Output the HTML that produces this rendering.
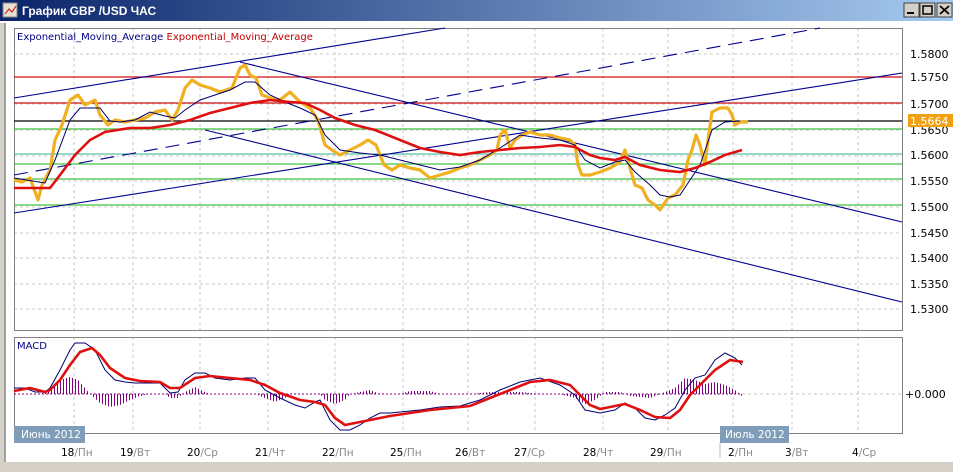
<!DOCTYPE html>
<html><head><meta charset="utf-8"><style>
body{margin:0;width:953px;height:467px;overflow:hidden;background:#d4d0c8;font-family:"Liberation Sans","DejaVu Sans",sans-serif}
</style></head><body>
<svg width="953" height="467" xmlns="http://www.w3.org/2000/svg" font-family="'DejaVu Sans','Liberation Sans',sans-serif">
<defs>
<linearGradient id="tb" x1="0" x2="1"><stop offset="0" stop-color="#0a246a"/><stop offset="1" stop-color="#a6caf0"/></linearGradient>
<pattern id="hp" width="3" height="10" patternUnits="userSpaceOnUse"><rect x="0" y="0" width="1" height="10" fill="#800080"/></pattern>
</defs>
<rect x="0" y="0" width="953" height="21" fill="url(#tb)"/>
<rect x="3" y="3" width="14" height="14" fill="#e8e0d0" stroke="#888"/>
<path d="M5 14 L9 9 L12 12 L16 6" stroke="#c00" fill="none"/>
<text x="22" y="15" fill="#fff" font-weight="bold" font-size="12" font-family="'Liberation Sans',sans-serif">График GBP /USD  ЧАС</text>
<g fill="#d4d0c8" stroke="#404040"><rect x="904" y="3" width="15" height="14"/><rect x="920" y="3" width="15" height="14"/><rect x="937" y="3" width="15" height="14"/></g>
<rect x="907" y="12" width="7" height="2" fill="#000"/><rect x="923" y="6" width="9" height="8" fill="none" stroke="#000" stroke-width="1.5"/>
<path d="M940 6 L949 14 M949 6 L940 14" stroke="#000" stroke-width="1.8"/>
<rect x="0" y="21" width="953" height="2" fill="#fff"/>
<rect x="4" y="23" width="949" height="440" fill="#fff"/>
<rect x="4" y="23" width="2" height="440" fill="#a0a0a0"/>
<rect x="0" y="462" width="953" height="5" fill="#d4d0c8"/>
<g stroke="#c8c8c8" stroke-dasharray="3,3" stroke-width="1">
<path d="M74 28V330M133 28V330M200 28V330M268 28V330M335 28V330M403 28V330M468 28V330M535 28V330M603 28V330M668 28V330M733 28V330M792 28V330M858 28V330"/>
<path d="M14 54H902M14 77H902M14 104H902M14 130H902M14 156H902M14 181H902M14 207H902M14 233H902M14 258H902M14 284H902M14 309H902"/>
<path d="M74 337V433M133 337V433M200 337V433M268 337V433M335 337V433M403 337V433M468 337V433M535 337V433M603 337V433M668 337V433M733 337V433M792 337V433M858 337V433"/>
<path d="M742 394H902"/>
</g>
<rect x="14.5" y="28.5" width="888" height="302" fill="none" stroke="#808080"/>
<rect x="14.5" y="337.5" width="888" height="96" fill="none" stroke="#808080"/>
<text x="17" y="40" font-size="10" fill="#000080">Exponential_Moving_Average <tspan fill="#c00000">Exponential_Moving_Average</tspan></text>
<path d="M14 77H902M14 103H902" stroke="#d01010" stroke-width="1.2"/>
<path d="M14 121H902" stroke="#000" stroke-width="1.2"/>
<path d="M14 129H902M14 164H902M14 179H902M14 205H902" stroke="#40c040" stroke-width="1.2"/>
<path d="M14 154H902" stroke="#30b090" stroke-width="1"/>
<g stroke="#000090" stroke-width="1.1" fill="none">
<path d="M14 98L445 28"/>
<path d="M14 175L820 28" stroke-dasharray="14,8"/>
<path d="M14 213L902 73"/>
<path d="M240 62L902 222"/>
<path d="M205 130L902 302"/>
</g>
<polyline fill="none" stroke="#f0b020" stroke-width="3.2" stroke-linejoin="round" points="14,180 22,182 30,178 38,200 42,185 50,170 55,140 62,125 70,100 78,95 85,105 95,100 100,115 108,125 115,120 125,122 135,120 145,118 155,112 165,110 172,120 178,110 185,88 192,80 200,85 210,88 220,92 232,88 240,68 245,65 250,75 256,78 262,95 270,98 280,100 290,92 300,102 310,108 318,120 325,145 332,150 340,155 350,150 360,145 368,140 376,145 384,165 392,170 400,165 410,168 420,170 430,178 440,175 450,172 460,168 470,165 480,160 490,155 497,150 500,135 505,130 510,148 515,140 522,135 530,132 540,135 550,135 560,138 570,140 575,145 578,165 582,175 590,175 600,172 610,168 620,162 625,150 630,168 635,185 642,188 648,200 655,205 660,210 668,198 675,195 683,185 688,160 692,150 696,135 700,145 705,165 708,140 712,112 720,108 728,108 732,115 735,125 740,122 748,122"/>
<polyline fill="none" stroke="#000070" stroke-width="1" points="14,178 45,183 55,160 70,120 80,108 92,108 100,108 110,121 120,122 135,120 150,112 165,116 175,118 185,110 200,100 215,95 230,90 245,82 255,82 270,95 285,102 300,108 315,115 325,135 340,150 360,153 380,155 400,160 420,165 440,170 460,167 480,160 500,148 520,135 540,138 560,140 575,145 585,160 600,168 615,162 625,160 635,172 650,185 660,195 670,197 680,195 690,180 700,165 712,130 725,122 740,121"/>
<polyline fill="none" stroke="#e01010" stroke-width="2.6" points="14,188 50,188 60,175 75,155 90,140 105,132 130,128 150,128 170,125 190,120 210,113 230,108 250,103 270,100 290,102 305,103 320,110 335,118 355,125 375,130 400,140 420,148 440,152 460,155 480,152 500,150 520,148 540,147 560,145 575,147 590,155 600,158 615,160 625,157 640,165 660,170 680,172 695,168 710,162 725,155 742,150"/>
<g font-size="11" fill="#000">
<text x="910" y="58">1.5800</text><text x="910" y="81">1.5750</text><text x="910" y="108">1.5700</text><text x="910" y="134">1.5650</text><text x="910" y="159">1.5600</text><text x="910" y="185">1.5550</text><text x="910" y="211">1.5500</text><text x="910" y="237">1.5450</text><text x="910" y="262">1.5400</text><text x="910" y="288">1.5350</text><text x="910" y="313">1.5300</text>
<text x="905" y="398">+0.000</text>
</g>
<rect x="908" y="114" width="45" height="13" fill="#f0a010"/>
<text x="910" y="125" font-size="11" fill="#fff">1.5664</text>
<text x="17" y="349" font-size="10" fill="#000080">MACD</text>
<path d="M14 394H742" stroke="#800080" stroke-dasharray="2,2"/>
<polygon fill="url(#hp)" points="14,394 40,394 50,390 60,380 70,377 78,380 85,388 90,394 100,403 110,407 120,405 130,400 140,396 150,394 165,394 170,398 178,398 185,392 195,387 205,392 210,394 255,394 265,398 275,402 285,398 290,394 320,394 325,400 335,404 345,400 350,394 360,392 370,390 380,394 400,394 410,391 430,391 440,394 470,394 490,392 520,392 540,394 560,394 575,398 585,404 595,400 605,392 620,392 630,396 650,398 660,394 675,388 685,378 695,380 705,384 715,382 725,385 735,390 742,396 742,394 14,394"/>
<polyline fill="none" stroke="#000070" stroke-width="1" points="14,388 25,388 35,392 45,392 50,388 60,370 70,350 75,343 85,343 95,350 105,370 115,380 125,382 135,383 150,383 160,383 170,393 178,392 185,380 195,373 205,373 215,378 230,380 245,378 255,378 265,390 280,398 295,405 305,408 315,402 320,400 330,420 340,430 350,430 360,425 370,418 380,413 390,413 400,412 420,410 440,407 460,406 480,400 500,390 520,382 540,378 560,385 575,395 585,410 600,413 615,410 625,403 635,408 645,418 655,420 665,415 675,408 685,390 695,378 705,375 715,360 725,353 735,358 742,365"/>
<polyline fill="none" stroke="#e01010" stroke-width="2.6" points="14,391 30,388 45,392 50,390 60,380 70,365 80,352 92,348 100,355 110,368 125,378 140,381 160,382 170,388 180,388 195,378 210,376 230,378 250,380 265,385 280,393 300,400 315,402 325,405 335,418 345,425 355,423 370,420 390,416 410,413 430,410 450,408 470,406 490,398 510,390 530,382 550,380 570,385 580,395 590,405 600,409 615,406 625,404 640,410 655,417 670,418 680,410 690,395 700,385 715,370 730,360 743,362"/>
<rect x="14" y="426" width="71" height="17" fill="#7f9db9"/>
<text x="21" y="438" font-size="10.5" fill="#fff">Июнь 2012</text>
<rect x="720" y="426" width="69" height="17" fill="#7f9db9"/>
<text x="725" y="438" font-size="10.5" fill="#fff">Июль 2012</text>
<path d="M720 443V458" stroke="#bbb"/>
<g font-size="10.5" fill="#000">
<text x="61" y="456">18<tspan fill="#888">/Пн</tspan></text>
<text x="120" y="456">19<tspan fill="#888">/Вт</tspan></text>
<text x="187" y="456">20<tspan fill="#888">/Ср</tspan></text>
<text x="255" y="456">21<tspan fill="#888">/Чт</tspan></text>
<text x="322" y="456">22<tspan fill="#888">/Пн</tspan></text>
<text x="390" y="456">25<tspan fill="#888">/Пн</tspan></text>
<text x="455" y="456">26<tspan fill="#888">/Вт</tspan></text>
<text x="514" y="456">27<tspan fill="#888">/Ср</tspan></text>
<text x="583" y="456">28<tspan fill="#888">/Чт</tspan></text>
<text x="650" y="456">29<tspan fill="#888">/Пн</tspan></text>
<text x="728" y="456">2<tspan fill="#888">/Пн</tspan></text>
<text x="785" y="456">3<tspan fill="#888">/Вт</tspan></text>
<text x="852" y="456">4<tspan fill="#888">/Ср</tspan></text>
</g>
</svg>
</body></html>
